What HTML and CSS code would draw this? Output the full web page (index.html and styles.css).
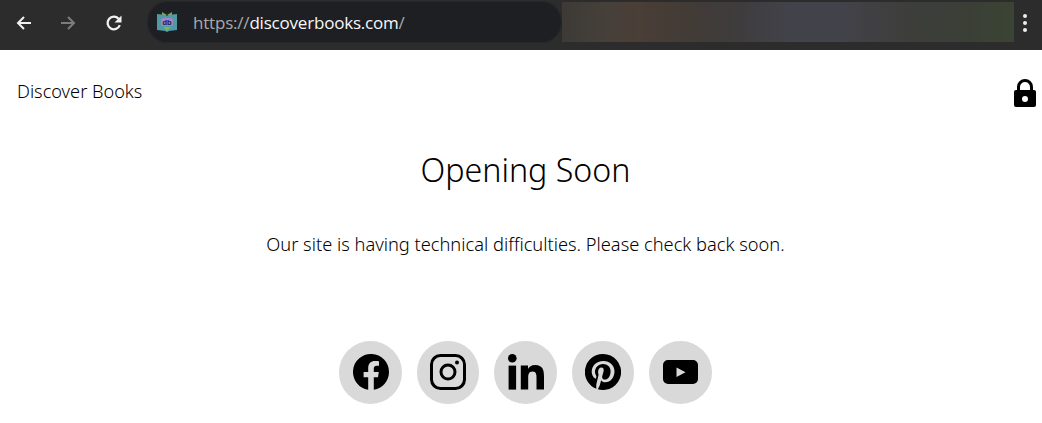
FILE: index.html
```html
<!DOCTYPE html>
<html lang="en">
<head>
    <meta charset="UTF-8">
    <meta name="viewport" content="width=device-width, initial-scale=1.0">
    <title>Discover Books</title>
    <link rel="stylesheet" href="styles.css">
</head>
<body>
    <div class="toolbar">
        <div class="nav-buttons">
            <svg class="nav-icon" viewBox="0 0 18 18"><path d="M16 9H3M9 3L3 9l6 6" fill="none" stroke="#f1f1f1" stroke-width="2"/></svg>
            <svg class="nav-icon" viewBox="0 0 18 18"><path d="M2 9h13M9 3l6 6-6 6" fill="none" stroke="#7c7c7c" stroke-width="2"/></svg>
            <svg class="nav-icon reload" viewBox="0 0 18 18"><path d="M14.800 11.200A6.300 6.300 0 1 1 13.600 4.800" fill="none" stroke="#f1f1f1" stroke-width="2.300"/><path d="M16.500 1.500V8.500H9.500z" fill="#f1f1f1"/></svg>
        </div>
        <div class="omnibox">
            <svg class="favicon" viewBox="0 0 22 22">
                <path d="M1 3l9 1 1 1 1-1 9-1v16l-8 1-2 1-2-1-8-1z" fill="#4f9aa6"/>
                <path d="M6 1l5 3 5-3v3H6z" fill="#6ea56a"/>
                <rect x="5" y="7" width="12" height="8" rx="2.500" fill="#a184c9"/>
                <text class="favicon-text" x="11" y="13.500">db</text>
                <path d="M7 16h8l-4 4z" fill="#7fb35a"/>
            </svg>
            <span class="url"><span class="url-scheme">https://</span>discoverbooks.com<span class="url-scheme">/</span></span>
        </div>
        <div class="blur-strip"></div>
        <div class="menu-dots"><i></i><i></i><i></i></div>
    </div>

    <div class="page">
        <div class="site-header">
            <span class="site-name">Discover Books</span>
            <svg class="lock" viewBox="0 0 22 28"><path fill-rule="evenodd" d="M2 11h1V8a8 8 0 0 1 16 0v3h1a2 2 0 0 1 2 2v13a2 2 0 0 1-2 2H2a2 2 0 0 1-2-2V13a2 2 0 0 1 2-2zm4 0h10V8a5 5 0 0 0-10 0zM11 17a3 3 0 1 0 0 6 3 3 0 0 0 0-6z"/></svg>
        </div>
        <div class="content">
            <h1>Opening Soon</h1>
            <p class="message">Our site is having technical difficulties. Please check back soon.</p>
            <div class="social">
                <a class="social-link" href="#">
                    <svg viewBox="0 0 36 36"><path d="M36 18a18 18 0 1 0-20.800 17.800V23.200h-4.600V18h4.600v-4c0-4.500 2.700-7 6.800-7 2 0 4 .4 4 .4v4.400h-2.300c-2.200 0-2.900 1.400-2.900 2.800V18h5l-.8 5.200h-4.200v12.600A18 18 0 0 0 36 18z"/></svg>
                </a>
                <a class="social-link" href="#">
                    <svg viewBox="0 0 36 36"><rect x="1.500" y="1.500" width="33" height="33" rx="9" fill="none" stroke="#000" stroke-width="3"/><circle cx="18" cy="18" r="7" fill="none" stroke="#000" stroke-width="3"/><circle cx="27" cy="8.500" r="2"/></svg>
                </a>
                <a class="social-link" href="#">
                    <svg viewBox="0 0 36 36"><circle cx="4.300" cy="4.300" r="4.300"/><rect x=".6" y="11.600" width="7.500" height="24"/><path d="M12.800 11.600H20v3.300c1-1.900 3.400-3.900 7.100-3.900 7.600 0 8.900 5 8.900 11.500v13h-7.500V24c0-2.800 0-6.400-3.900-6.400s-4.400 3-4.400 6.200v11.800h-7.400z"/></svg>
                </a>
                <a class="social-link" href="#">
                    <svg viewBox="0 0 36 36"><path d="M18 0a18 18 0 0 0-6.600 34.800c-.2-1.400-.3-3.600.1-5.200l2.100-8.900s-.5-1.100-.5-2.700c0-2.500 1.500-4.400 3.300-4.400 1.600 0 2.300 1.200 2.300 2.600 0 1.600-1 3.900-1.500 6.100-.4 1.800.9 3.300 2.700 3.300 3.200 0 5.700-3.400 5.700-8.300 0-4.300-3.100-7.300-7.500-7.300-5.100 0-8.100 3.800-8.100 7.800 0 1.500.6 3.200 1.300 4.100.1.200.2.300.1.500l-.5 2c-.1.300-.3.400-.6.200-2.200-1-3.600-4.300-3.600-6.900 0-5.600 4.100-10.800 11.800-10.800 6.200 0 11 4.400 11 10.300 0 6.100-3.900 11.100-9.300 11.100-1.800 0-3.500-.9-4.100-2.100l-1.100 4.300c-.4 1.500-1.500 3.500-2.200 4.700A18 18 0 1 0 18 0z"/></svg>
                </a>
                <a class="social-link" href="#">
                    <svg class="youtube" viewBox="0 0 35 24"><path d="M5 0h25a5 5 0 0 1 5 5v14a5 5 0 0 1-5 5H5a5 5 0 0 1-5-5V5a5 5 0 0 1 5-5zm8.500 7.500v9.500l9-4.750z" fill-rule="evenodd"/></svg>
                </a>
            </div>
        </div>
    </div>
</body>
</html>
```

FILE: styles.css
```css
html, body {
    margin: 0;
    padding: 0;
    height: 423px;
    overflow: hidden;
    background-color: #fff;
}
body {
    font-family: "Noto Sans", "Open Sans", sans-serif;
    font-weight: 300;
    color: #000;
}

/* browser chrome */
.toolbar {
    display: flex;
    align-items: center;
    height: 50px;
    padding: 0 0 1px 0;
    box-sizing: border-box;
    background-color: #2c2c2c;
}
.nav-buttons {
    display: flex;
    gap: 26px;
    width: 147px;
    box-sizing: border-box;
    padding-left: 15px;
    padding-bottom: 3px;
}
.nav-icon {
    width: 18px;
    height: 18px;
}
.reload {
    margin-left: 2px;
}
.omnibox {
    display: flex;
    align-items: center;
    width: 415px;
    height: 42px;
    margin-bottom: 5px;
    box-sizing: border-box;
    padding-left: 9px;
    background-color: #1d1f23;
    border-radius: 21px;
    box-shadow: inset 0 0 0 1px #26282c;
}
.favicon {
    width: 22px;
    height: 22px;
}
.favicon-text {
    font-family: "Liberation Sans", sans-serif;
    font-size: 7.500px;
    font-weight: 700;
    text-anchor: middle;
    fill: #20202c;
}
.url {
    margin-left: 15px;
    font-family: "Open Sans", sans-serif;
    font-weight: 400;
    font-size: 17px;
    letter-spacing: -0.2px;
    color: #f8f8f8;
}
.url-scheme {
    color: #aaa;
}
.blur-strip {
    width: 452px;
    height: 40px;
    margin-bottom: 5px;
    background: linear-gradient(to right, #3d3a36 0%, #46403a 10%, #4a3e36 17%, #423b36 28%, #3e3c3c 38%, #42424a 50%, #42424a 62%, #3e3e3c 75%, #3a3f36 90%, #3b4434 100%);
}
.menu-dots {
    display: flex;
    flex-direction: column;
    gap: 3px;
    margin-left: 9px;
    margin-bottom: 3px;
}
.menu-dots i {
    display: block;
    width: 4px;
    height: 4px;
    border-radius: 50%;
    background-color: #eee;
}

/* page */
.page {
    padding: 0 17px;
}
.site-header {
    display: flex;
    justify-content: space-between;
    align-items: center;
    height: 82px;
}
.site-name {
    font-size: 18.150px;
}
.lock {
    width: 22px;
    height: 28px;
    margin-top: 4px;
    margin-right: -11px;
}
.content {
    display: flex;
    flex-direction: column;
    align-items: center;
    padding-left: 9px;
}
h1 {
    margin: 0;
    font-size: 32.200px;
    font-weight: 300;
    line-height: 44px;
    padding-top: 16px;
}
.message {
    margin: 39px 0 0 0;
    font-size: 18.260px;
    line-height: 25px;
}
.social {
    display: flex;
    gap: 15px;
    margin-top: 85px;
}
.social-link {
    display: flex;
    align-items: center;
    justify-content: center;
    width: 62.500px;
    height: 62.500px;
    border-radius: 50%;
    background-color: #d9d9d9;
}
.social-link svg {
    width: 36px;
    height: 36px;
}
.social-link .youtube {
    width: 35px;
    height: 24px;
}
```
